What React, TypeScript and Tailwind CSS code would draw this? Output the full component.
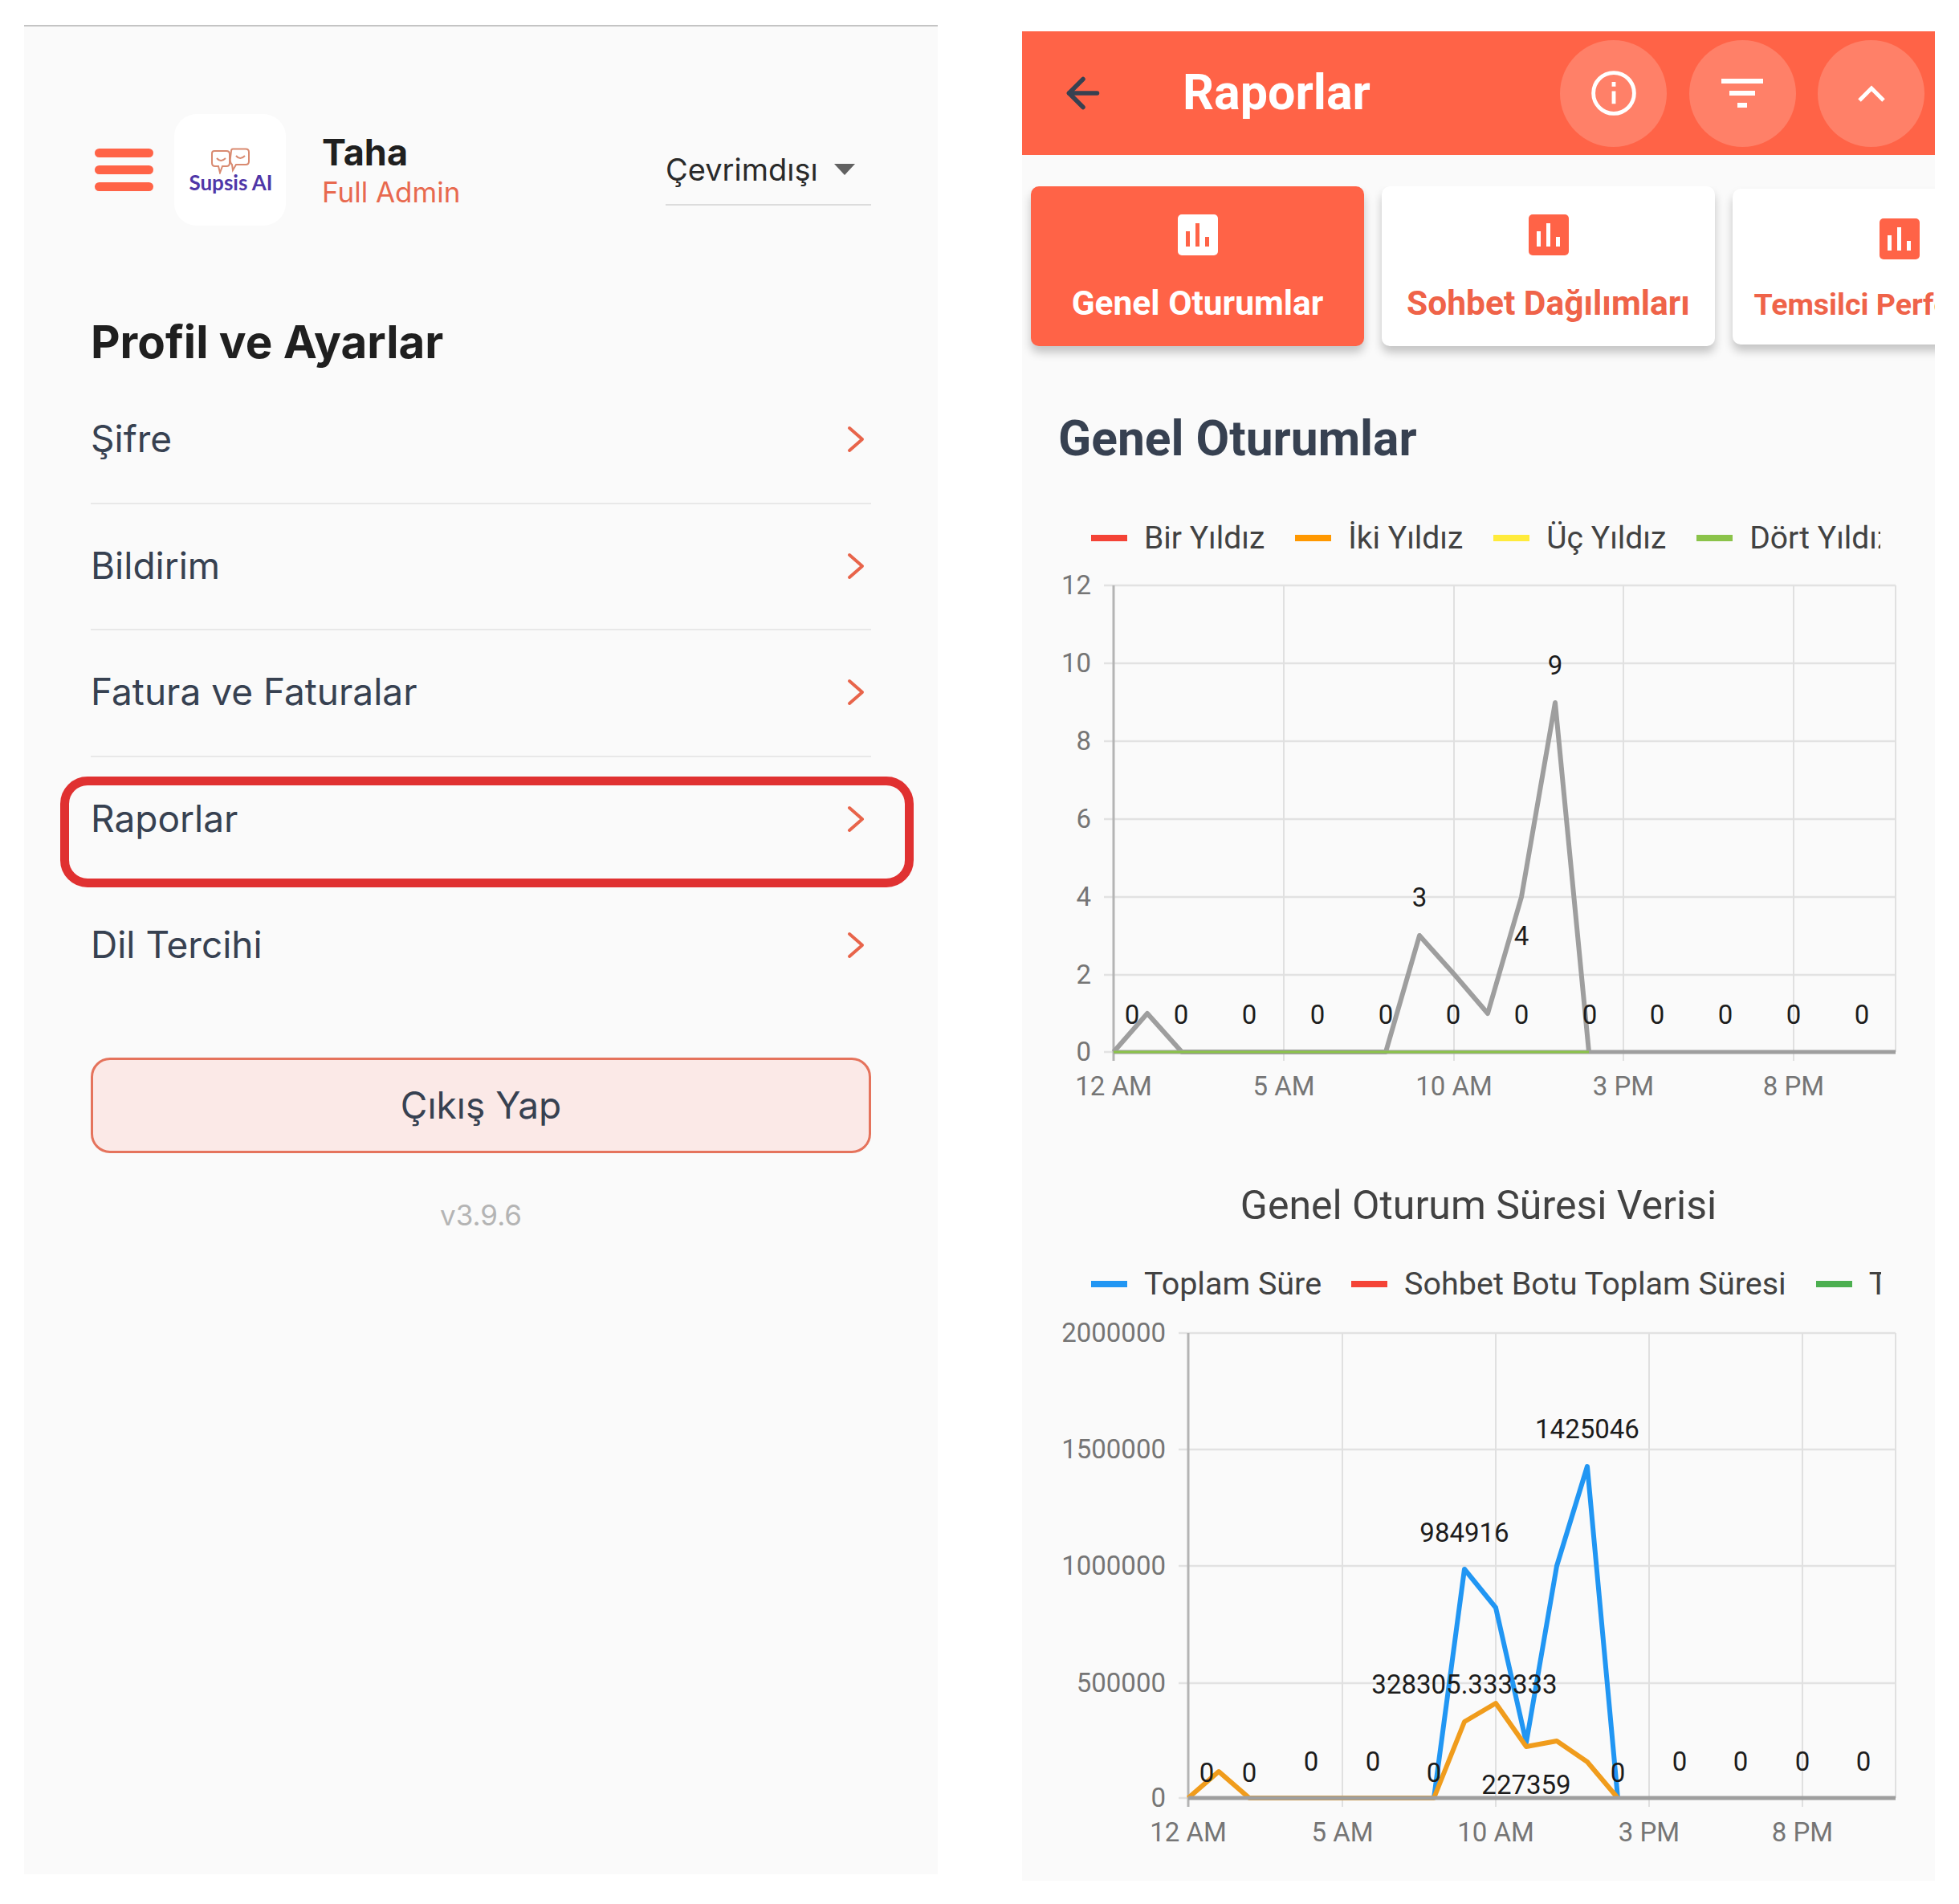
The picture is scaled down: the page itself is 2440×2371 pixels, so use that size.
import React from 'react';
import { ArrowLeft } from 'lucide-react';

const menuItems = ['Şifre', 'Bildirim', 'Fatura ve Faturalar', 'Raporlar', 'Dil Tercihi'];

const Chevron = () => (
  <svg width="22" height="34" viewBox="0 0 22 34" fill="none" className="mt-[14px] mr-[8px]">
    <path d="M3 3 L19 17 L3 31" stroke="#e8644a" strokeWidth="4" strokeLinecap="round" strokeLinejoin="round" />
  </svg>
);

const Logo = () => (
  <div className="w-[139px] h-[139px] rounded-[28px] bg-white flex flex-col items-center justify-center shrink-0">
    <svg width="50" height="33" viewBox="0 0 50 33" fill="none" stroke="#d98a70" strokeWidth="2">
      <path d="M5 4 H20 Q24 4 24 8 V19 Q24 23 20 23 H15 L12 31 L10 23 H6 Q2 23 2 19 V7 Q2 4 5 4 Z" />
      <path d="M28 1.5 H44 Q48 1.5 48 5.5 V17 Q48 21 44 21 H32 L28 28 L27 21 Q24 18 25 12 L26 4 Q26 1.5 28 1.5 Z" />
      <path d="M8 13 Q13 19 19 13 M32 10 Q37 16 43 10" />
    </svg>
    <span className="-mt-[3px] ml-[2px] text-[26px] leading-[26px] font-bold text-[#4f37a8] font-['Lato',sans-serif]">Supsis AI</span>
  </div>
);

const LeftPanel = () => (
  <div className="w-[1138px] h-[2303px] bg-[#fafafa] border-t-2 border-[#c4c4c4] font-['Inter',sans-serif] pl-[83px] pr-[83px] shrink-0">
    <div className="flex items-center pt-[109px]">
      <div className="flex flex-col gap-[10px] w-[73px] ml-[5px] shrink-0">
        <div className="h-[11px] rounded-full bg-[#ff6347]" />
        <div className="h-[11px] rounded-full bg-[#ff6347]" />
        <div className="h-[11px] rounded-full bg-[#ff6347]" />
      </div>
      <div className="ml-[26px]">
        <Logo />
      </div>
      <div className="ml-[45px] flex flex-col">
        <span className="text-[45px] leading-[54px] font-bold text-[#1f1f1f]">Taha</span>
        <span className="text-[35px] leading-[44px] text-[#e8694f]">Full Admin</span>
      </div>
      <div className="ml-auto w-[256px] h-[89px] border-b-2 border-[#dcdcdc] flex items-center">
        <span className="text-[38px] leading-[46px] text-[#2a2a2a]">Çevrimdışı</span>
        <svg width="26" height="14" viewBox="0 0 26 14" className="ml-[20px]">
          <path d="M0 0 H26 L13 14 Z" fill="#616161" />
        </svg>
      </div>
    </div>

    <h1 className="mt-[111px] text-[56.5px] leading-[68px] font-bold text-[#1f1f1f]">Profil ve Ayarlar</h1>

    <div className="mt-[10px]">
      {menuItems.map((item, i) => (
        <div
          key={item}
          className={
            i < 4
              ? 'relative h-[157.5px] pt-[46px] flex justify-between items-start border-b-2 border-[#e8e8e8]'
              : 'relative h-[157.5px] pt-[46px] flex justify-between items-start'
          }
        >
          <span className="text-[46px] leading-[60px] text-[#374151]">{item}</span>
          <Chevron />
          {item === 'Raporlar' && (
            <div className="absolute left-[-38px] right-[-53px] top-[24px] h-[138px] border-[11px] border-[#e03131] rounded-[34px]" />
          )}
        </div>
      ))}
    </div>

    <button className="mt-[59px] w-full h-[119px] rounded-[24px] border-[3px] border-[#e5735c] bg-[#fbe9e7] text-[46px] text-[#374151]">
      Çıkış Yap
    </button>
    <div className="mt-[55px] text-center text-[35px] leading-[44px] text-[#b4b4b4]">v3.9.6</div>
  </div>
);

const ChartIcon = ({ active }: { active: boolean }) => (
  <svg width="50" height="51" viewBox="0 0 50 51" className="shrink-0">
    <rect width="50" height="51" rx="5" fill={active ? '#ffffff' : '#ff6347'} />
    <g fill={active ? '#ff6347' : '#ffffff'}>
      <rect x="10" y="21" width="5" height="19" />
      <rect x="22" y="11" width="5" height="29" />
      <rect x="34" y="28" width="5" height="12" />
    </g>
  </svg>
);

const tabClass =
  'shrink-0 w-[415px] rounded-[10px] flex flex-col items-center shadow-[0_8px_12px_rgba(0,0,0,0.22)]';

const Tabs = () => (
  <div className="mt-[39px] pl-[11px] pb-[20px] flex items-center gap-[22px] overflow-hidden">
    <div className={`${tabClass} h-[199px] bg-[#ff6347] pt-[35px]`}>
      <ChartIcon active />
      <span className="mt-[34px] text-[42.5px] leading-[52px] font-bold text-white whitespace-nowrap">Genel Oturumlar</span>
    </div>
    <div className={`${tabClass} h-[199px] bg-white pt-[35px]`}>
      <ChartIcon active={false} />
      <span className="mt-[34px] text-[42.5px] leading-[52px] font-bold text-[#ef6349] whitespace-nowrap">Sohbet Dağılımları</span>
    </div>
    <div className={`${tabClass} h-[194px] bg-white pt-[37px]`}>
      <ChartIcon active={false} />
      <span className="mt-[30px] text-[37.5px] leading-[52px] font-bold text-[#ef6349] whitespace-nowrap">Temsilci Performansı</span>
    </div>
  </div>
);

type Label = { x: number; y: number; t: string };

type Series = { color: string; points: [number, number][] };

type ChartProps = {
  box: string;
  width: number;
  height: number;
  left: number;
  right: number;
  top: number;
  bottom: number;
  xGrid: number[];
  xLabels: string[];
  yGrid: { y: number; t: string }[];
  series: Series[];
  labels: Label[];
  baseSplit: number;
  baseColor: string;
  labelRight: number;
  xLabelY: number;
};

const Chart = (c: ChartProps) => (
  <svg width={c.width} height={c.height} viewBox={c.box} className="block">
    {c.yGrid.map((g) => (
      <line key={g.y} x1={c.left - 12} x2={c.right} y1={g.y} y2={g.y} stroke="#e2e2e2" strokeWidth="2.5" />
    ))}
    {c.xGrid.map((x) => (
      <line key={x} x1={x} x2={x} y1={c.top} y2={c.bottom + 11} stroke="#e0e0e0" strokeWidth="2" />
    ))}
    <line x1={c.right} x2={c.right} y1={c.top} y2={c.bottom} stroke="#e0e0e0" strokeWidth="2" />
    <line x1={c.left} x2={c.left} y1={c.top} y2={c.bottom + 11} stroke="#b4b4b4" strokeWidth="3" />
    {c.series.map((s) => (
      <polyline
        key={s.color}
        points={s.points.map((p) => p.join(',')).join(' ')}
        fill="none"
        stroke={s.color}
        strokeWidth="6"
        strokeLinejoin="round"
      />
    ))}
    <line x1={c.left} x2={c.right} y1={c.bottom} y2={c.bottom} stroke="#9e9e9e" strokeWidth="5" />
    <line x1={c.left} x2={c.baseSplit} y1={c.bottom} y2={c.bottom} stroke={c.baseColor} strokeWidth="3" />
    <g fontSize="33" fill="#757575" textAnchor="end">
      {c.yGrid.map((g) => (
        <text key={g.t} x={c.labelRight} y={g.y + 11}>
          {g.t}
        </text>
      ))}
    </g>
    <g fontSize="33" fill="#757575" textAnchor="middle">
      {c.xLabels.map((t, i) => (
        <text key={t} x={c.xGrid[i]} y={c.xLabelY + 11}>
          {t}
        </text>
      ))}
    </g>
    <g fontSize="33" fill="#1c1c1c" textAnchor="middle">
      {c.labels.map((l, i) => (
        <text key={i} x={l.x} y={l.y + 11}>
          {l.t}
        </text>
      ))}
    </g>
  </svg>
);

const zeros = (xs: number[], y: number): Label[] => xs.map((x) => ({ x, y, t: '0' }));

const LegendItem = ({ color, label, gap, wide }: { color: string; label: string; gap: number; wide?: boolean }) => (
  <div className="flex items-center shrink-0" style={{ marginRight: gap }}>
    <div className="w-[45px] h-[8px] mr-[21px]" style={{ backgroundColor: color }} />
    <span
      className={
        wide
          ? 'text-[39.5px] leading-[46px] text-[#424242] whitespace-nowrap'
          : 'text-[39px] leading-[46px] text-[#424242] whitespace-nowrap'
      }
    >
      {label}
    </span>
  </div>
);

const RightPanel = () => (
  <div className="w-[1137px] h-[2303px] mt-[8px] bg-[#fafafa] overflow-hidden font-['Roboto',sans-serif] shrink-0">
    <div className="h-[154px] bg-[#ff6347] flex items-center">
      <ArrowLeft size={60} strokeWidth={2.2} color="#374151" className="ml-[46px] shrink-0" />
      <span className="ml-[94px] mb-[2px] text-[61px] font-bold text-white leading-[68px]">Raporlar</span>
      <div className="ml-auto mr-[13px] flex gap-[27.5px]">
        <div className="w-[133px] h-[133px] rounded-full bg-[#ff8068] flex items-center justify-center">
          <svg width="58" height="58" viewBox="0 0 24 24" fill="none" stroke="#fff" strokeWidth="2">
            <circle cx="12" cy="12" r="10.5" />
            <path d="M12 11 V17.5 M12 6.2 V8.6" />
          </svg>
        </div>
        <div className="w-[133px] h-[133px] rounded-full bg-[#ff8068] flex items-center justify-center">
          <svg width="52" height="36" viewBox="0 0 52 36" fill="#fff">
            <rect x="0" y="0" width="52" height="6" />
            <rect x="10" y="15" width="32" height="6" />
            <rect x="20" y="30" width="12" height="6" />
          </svg>
        </div>
        <div className="w-[133px] h-[133px] rounded-full bg-[#ff8068] flex items-center justify-center">
          <svg width="34" height="21" viewBox="0 0 34 21" fill="none" stroke="#fff" strokeWidth="5">
            <path d="M2 19 L17 4 L32 19" />
          </svg>
        </div>
      </div>
    </div>

    <Tabs />

    <h2 className="mt-[62px] pl-[45px] text-[60.5px] leading-[68px] font-bold text-[#374151]">Genel Oturumlar</h2>

    <div className="mt-[66px] ml-[86px] w-[983px] flex overflow-hidden">
      <LegendItem color="#f44336" label="Bir Yıldız" gap={38} />
      <LegendItem color="#ff9800" label="İki Yıldız" gap={38} />
      <LegendItem color="#ffeb3b" label="Üç Yıldız" gap={38} />
      <LegendItem color="#8bc34a" label="Dört Yıldız" gap={0} />
    </div>

    <Chart
      box="1273 692 1137 687"
      width={1137}
      height={687}
      left={1387}
      right={2361}
      top={728}
      bottom={1309}
      xGrid={[1387, 1599, 1811, 2022, 2234]}
      xLabels={['12 AM', '5 AM', '10 AM', '3 PM', '8 PM']}
      yGrid={[
        { y: 728, t: '12' },
        { y: 825, t: '10' },
        { y: 922, t: '8' },
        { y: 1019, t: '6' },
        { y: 1116, t: '4' },
        { y: 1213, t: '2' },
        { y: 1309, t: '0' },
      ]}
      series={[
        {
          color: '#9e9e9e',
          points: [
            [1387, 1309],
            [1429, 1261],
            [1472, 1309],
            [1726, 1309],
            [1768, 1164],
            [1811, 1212],
            [1853, 1261],
            [1895, 1116],
            [1937, 874],
            [1979, 1309],
          ],
        },
      ]}
      labels={[
        ...zeros([1410, 1471, 1556, 1641, 1726, 1810, 1895, 1980, 2064, 2149, 2234, 2319], 1263),
        { x: 1768, y: 1117, t: '3' },
        { x: 1895, y: 1165, t: '4' },
        { x: 1937, y: 828, t: '9' },
      ]}
      baseSplit={1979}
      baseColor="#8bc34a"
      labelRight={1359}
      xLabelY={1352}
    />

    <div className="mt-[91px] text-center text-[50px] leading-[60px] text-[#424242]">Genel Oturum Süresi Verisi</div>

    <div className="mt-[45px] ml-[86px] w-[984px] flex overflow-hidden">
      <LegendItem wide color="#2196f3" label="Toplam Süre" gap={37} />
      <LegendItem wide color="#f44336" label="Sohbet Botu Toplam Süresi" gap={37} />
      <LegendItem wide color="#4caf50" label="Temsilci Toplam Süresi" gap={0} />
    </div>

    <Chart
      box="1273 1621 1137 720"
      width={1137}
      height={720}
      left={1480}
      right={2361}
      top={1659}
      bottom={2238}
      xGrid={[1480, 1672, 1863, 2054, 2245]}
      xLabels={['12 AM', '5 AM', '10 AM', '3 PM', '8 PM']}
      yGrid={[
        { y: 1659, t: '2000000' },
        { y: 1804, t: '1500000' },
        { y: 1949, t: '1000000' },
        { y: 2095, t: '500000' },
        { y: 2238, t: '0' },
      ]}
      series={[
        {
          color: '#2196f3',
          points: [
            [1786, 2238],
            [1824, 1953],
            [1863, 2001],
            [1901, 2169],
            [1939, 1949],
            [1977, 1825],
            [2015, 2238],
          ],
        },
        {
          color: '#f09c1c',
          points: [
            [1480, 2238],
            [1518, 2205],
            [1556, 2238],
            [1786, 2238],
            [1824, 2143],
            [1863, 2120],
            [1901, 2174],
            [1939, 2167],
            [1977, 2193],
            [2015, 2238],
          ],
        },
      ]}
      labels={[
        ...zeros([1503, 1556, 1786, 2015], 2207),
        ...zeros([1633, 1710, 2092, 2168, 2245, 2321], 2193),
        { x: 1977, y: 1779, t: '1425046' },
        { x: 1824, y: 1908, t: '984916' },
        { x: 1824, y: 2097, t: '328305.333333' },
        { x: 1901, y: 2222, t: '227359' },
      ]}
      baseSplit={1480}
      baseColor="#9e9e9e"
      labelRight={1452}
      xLabelY={2281}
    />
  </div>
);

const App = () => (
  <div className="w-[2440px] h-[2371px] bg-white flex items-start pt-[31px] pl-[30px] gap-[105px] overflow-hidden">
    <LeftPanel />
    <RightPanel />
  </div>
);

export default App;
